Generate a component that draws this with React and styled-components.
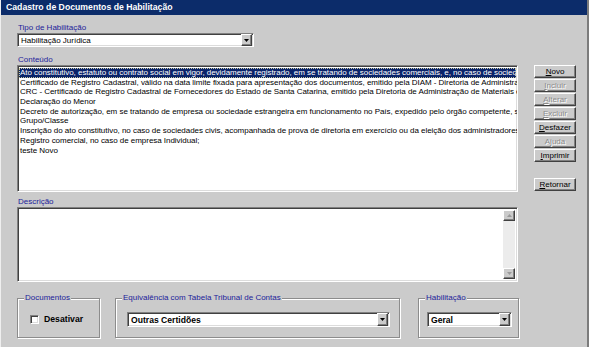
import styled, { createGlobalStyle } from "styled-components";

const GlobalStyle = createGlobalStyle`
  html, body {
    margin: 0;
    padding: 0;
    background: #cbcbcb;
  }
  body {
    font-family: "Liberation Sans", Arial, sans-serif;
    font-size: 8px;
  }
`;

const items = [
  "Ato constitutivo, estatuto ou contrato social em vigor, devidamente registrado, em se tratando de sociedades comerciais, e, no caso de sociedades por ações, acompanhado de documentos de eleição de seus administradores;",
  "Certificado de Registro Cadastral, válido na data limite fixada para apresentação dos documentos, emitido pela DIAM - Diretoria de Administração de Materiais",
  "CRC - Certificado de Registro Cadastral de Fornecedores do Estado de Santa Catarina, emitido pela Diretoria de Administração de Materiais e Serviços",
  "Declaração do Menor",
  "Decreto de autorização, em se tratando de empresa ou sociedade estrangeira em funcionamento no País, expedido pelo órgão competente, se assim o exigir;",
  "Grupo/Classe",
  "Inscrição do ato constitutivo, no caso de sociedades civis, acompanhada de prova de diretoria em exercício ou da eleição dos administradores;",
  "Registro comercial, no caso de empresa Individual;",
  "teste Novo",
];

const buttons = [
  { key: "N", rest: "ovo" },
  { key: "I", rest: "ncluir", disabled: true },
  { key: "A", rest: "lterar", disabled: true },
  { key: "E", rest: "xcluir", disabled: true },
  { key: "D", rest: "esfazer" },
  { pre: "A", key: "j", rest: "uda", disabled: true },
  { key: "I", rest: "mprimir" },
];

const Window = styled.div`
  width: 589px;
  height: 347px;
  box-sizing: border-box;
  background: #cbcbcb;
  border-left: 1px solid #efefef;
  border-right: 2px solid #7c7c7c;
  overflow: hidden;
  display: flex;
  flex-direction: column;
`;

const TitleBar = styled.div`
  height: 15px;
  background: #0c2c6a;
  color: #fff;
  font-weight: bold;
  font-size: 8.7px;
  line-height: 15px;
  padding-left: 5px;
  white-space: nowrap;
`;

const Body = styled.div`
  display: flex;
  padding: 8px 0 0 16px;
`;

const MainColumn = styled.div`
  width: 502px;
  display: flex;
  flex-direction: column;
`;

const SideColumn = styled.div`
  margin-left: 15px;
  padding-top: 42px;
  display: flex;
  flex-direction: column;
  gap: 1px;
`;

const Label = styled.div`
  height: 10px;
  line-height: 10px;
  color: #22229a;
  padding-left: 1px;
  margin-top: ${(p) => p.$top || 0}px;
`;

const sunken = `
  box-sizing: border-box;
  border: 1px solid;
  border-color: #808080 #ffffff #ffffff #808080;
  box-shadow: inset 1px 1px 0 #404040, inset -1px -1px 0 #dcdcdc;
  background: #fff;
`;

const raised = `
  box-sizing: border-box;
  border: 1px solid;
  border-color: #ffffff #404040 #404040 #ffffff;
  box-shadow: inset -1px -1px 0 #808080;
  background: #cbcbcb;
`;

const Combo = styled.div`
  ${sunken}
  width: ${(p) => p.$width}px;
  height: ${(p) => p.$height || 14}px;
  display: flex;
  align-items: center;
  padding: 0 1px 0 2px;
`;

const ComboText = styled.span`
  flex: 1;
  font-weight: ${(p) => (p.$bold ? "bold" : "normal")};
  font-size: ${(p) => (p.$bold ? "8.6px" : "8px")};
  color: #000;
  white-space: nowrap;
  padding-left: 1px;
`;

const DropButton = styled.div`
  ${raised}
  width: 11px;
  height: ${(p) => p.$height || 12}px;
  display: flex;
  align-items: center;
  justify-content: center;
`;

const ListBox = styled.div`
  ${sunken}
  width: 501px;
  height: 127px;
  padding: 2px 1px;
  overflow: hidden;
`;

const Row = styled.div`
  height: 9.7px;
  line-height: 9.7px;
  white-space: nowrap;
  letter-spacing: -0.04px;
  padding-left: 1px;
  color: ${(p) => (p.$selected ? "#fff" : "#000")};
  background: ${(p) => (p.$selected ? "#0a246a" : "transparent")};
  outline: ${(p) => (p.$selected ? "1px dotted #c8c8a0" : "none")};
  outline-offset: -1px;
`;

const TextArea = styled.div`
  ${sunken}
  width: 501px;
  height: 75px;
  padding: 2px;
  display: flex;
  justify-content: flex-end;
`;

const ScrollBar = styled.div`
  width: 12px;
  background: #ececec;
  display: flex;
  flex-direction: column;
  justify-content: space-between;
`;

const ScrollButton = styled.div`
  ${raised}
  height: 11px;
  display: flex;
  align-items: center;
  justify-content: center;
`;

const Groups = styled.div`
  display: flex;
  margin-top: 16px;
`;

const Group = styled.div`
  position: relative;
  box-sizing: border-box;
  width: ${(p) => p.$width}px;
  height: 40px;
  margin-right: ${(p) => p.$gap || 0}px;
  border: 1px solid #8c8c8c;
  box-shadow: inset 1px 1px 0 #fff, 1px 1px 0 #fff;
  padding: ${(p) => p.$padTop}px 0 0 ${(p) => p.$padLeft}px;
`;

const Legend = styled.span`
  position: absolute;
  top: -6px;
  left: 6px;
  padding: 0 1px;
  background: #cbcbcb;
  color: #22229a;
  line-height: 10px;
  white-space: nowrap;
`;

const CheckRow = styled.label`
  display: flex;
  align-items: center;
  gap: 5px;
  font-weight: bold;
  font-size: 8.7px;
`;

const CheckBox = styled.span`
  ${sunken}
  width: 9px;
  height: 9px;
`;

const Button = styled.div`
  ${raised}
  width: 42px;
  height: 13px;
  line-height: 11px;
  display: flex;
  align-items: center;
  justify-content: center;
  color: ${(p) => (p.$disabled ? "#8c8c8c" : "#000")};
  text-shadow: ${(p) => (p.$disabled ? "1px 1px 0 #fff" : "none")};
  margin-top: ${(p) => p.$top || 0}px;
  u {
    text-decoration: underline;
  }
`;

function Arrow({ up, color = "#000" }) {
  return (
    <svg width="5" height="3" viewBox="0 0 5 3">
      <polygon points={up ? "0,3 5,3 2.5,0" : "0,0 5,0 2.5,3"} fill={color} />
    </svg>
  );
}

function Select({ width, height, bold, value }) {
  return (
    <Combo $width={width} $height={height}>
      <ComboText $bold={bold}>{value}</ComboText>
      <DropButton $height={height ? height - 2 : 12}>
        <Arrow />
      </DropButton>
    </Combo>
  );
}

export default function App() {
  return (
    <Window>
      <GlobalStyle />
      <TitleBar>Cadastro de Documentos de Habilitação</TitleBar>
      <Body>
        <MainColumn>
          <Label>Tipo de Habilitação</Label>
          <Select width={237} value="Habilitação Jurídica" />
          <Label $top={8}>Conteúdo</Label>
          <ListBox>
            {items.map((text, i) => (
              <Row key={i} $selected={i === 0}>
                {text}
              </Row>
            ))}
          </ListBox>
          <Label $top={5}>Descrição</Label>
          <TextArea>
            <ScrollBar>
              <ScrollButton>
                <Arrow up color="#9a9a9a" />
              </ScrollButton>
              <ScrollButton>
                <Arrow color="#9a9a9a" />
              </ScrollButton>
            </ScrollBar>
          </TextArea>
          <Groups>
            <Group $width={83} $gap={15} $padTop={15} $padLeft={12}>
              <Legend>Documentos</Legend>
              <CheckRow>
                <CheckBox />
                Desativar
              </CheckRow>
            </Group>
            <Group $width={285} $gap={18} $padTop={13} $padLeft={11}>
              <Legend>Equivalência com Tabela Tribunal de Contas</Legend>
              <Select width={263} height={15} bold value="Outras Certidões" />
            </Group>
            <Group $width={101} $padTop={13} $padLeft={8}>
              <Legend>Habilitação</Legend>
              <Select width={85} height={15} bold value="Geral" />
            </Group>
          </Groups>
        </MainColumn>
        <SideColumn>
          {buttons.map((b, i) => (
            <Button key={i} $disabled={b.disabled}>
              {b.pre}
              <u>{b.key}</u>
              {b.rest}
            </Button>
          ))}
          <Button $top={15}>
            <u>R</u>etornar
          </Button>
        </SideColumn>
      </Body>
    </Window>
  );
}
